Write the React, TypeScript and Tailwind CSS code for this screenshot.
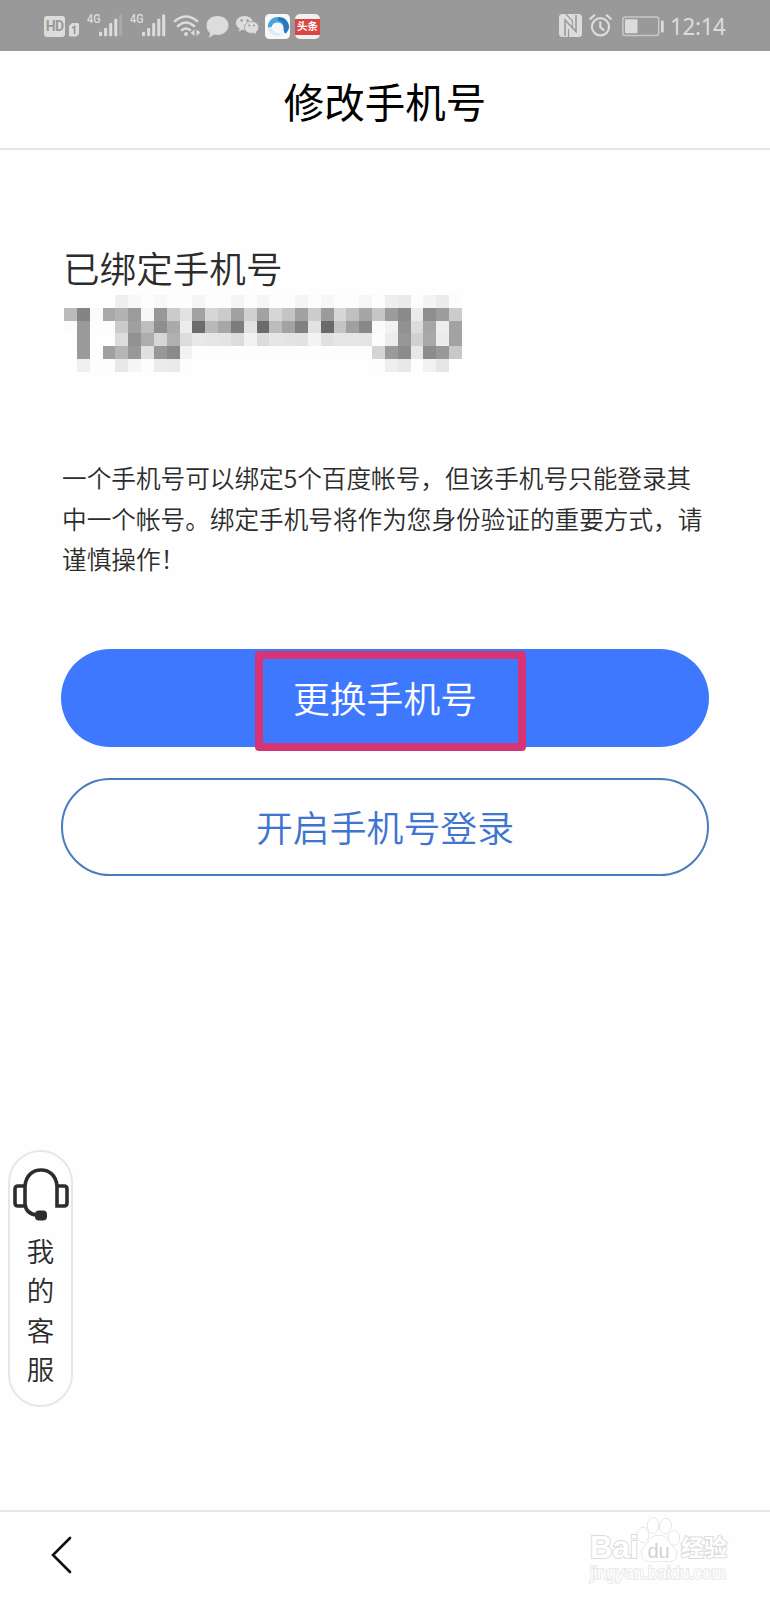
import React from "react";

const MOSAIC: string[] = [
  "fe fe fe fe ef f8 fd f8 fd fd f5 fd fd f5 fd f5 fd fd f5 fd f7 fd fd f6 fd ee ea fc f4 ec fc",
  "bb 84 fb a9 b3 9b f7 98 cb e2 a2 d6 cb a1 d0 a2 d6 c4 a1 cc 9b d6 c0 a6 c6 9c 8a ea 8e 9c cc",
  "fc 9a fd fd cb a0 be 8e aa ec 6c b9 a7 7c e2 6b bd a2 80 e2 6a c4 a0 88 fa f2 91 dc a6 ee a2",
  "fe 9a fe fe dc 92 ad d6 b0 dc e8 e6 e4 dc f2 dc e6 e4 e2 f4 e0 e6 e6 e4 fc ec 96 d0 a8 ec a2",
  "fe 9a fe a0 b5 98 e0 98 8a f2 fd fd fd fd fd fd fd fd fd fd fd fd fd fd d4 9a 8c e8 8c 98 c8",
  "fe f0 fe fd e8 f5 fd ec ea fd fe fe fe fe fe fe fe fe fe fe fe fe fe fe fd ee e8 fe f2 e6 fe",
];

function Signal({ dim }: { dim?: boolean }) {
  return (
    <div className="flex h-[23px] w-[37px]">
      <span className="h-3 w-3 origin-left scale-x-90 text-[12px] leading-[11px] font-medium">4G</span>
      <svg className="h-[23px] w-[24px]" viewBox="0 0 25 23" fill="currentColor">
        <rect x="0" y="18" width="3.2" height="4.6" rx="1" />
        <rect x="5.3" y="14" width="3.2" height="8.6" rx="1" />
        <rect x="10.6" y="9" width="3.2" height="13.6" rx="1" />
        <rect x="15.9" y="4.5" width="3.2" height="18.1" rx="1" />
        <rect x="21" y="0" width="3.2" height="22.6" rx="1" opacity={dim ? 0.25 : 1} />
      </svg>
    </div>
  );
}

function StatusBar() {
  return (
    <div className="flex h-[51px] shrink-0 items-start bg-[#999999] pt-[14px] pl-11 font-['Roboto'] text-[#dcdcdc]">
      <div className="mt-[2px] flex h-[21px] w-[21px] items-center justify-center rounded-[3px] bg-[#dcdcdc] text-[14px] font-bold tracking-tighter text-[#999999]">
        HD
      </div>
      <svg className="mt-[9px] ml-1 h-[14px] w-[10px]" viewBox="0 0 10 14">
        <path d="M0 3 3 0h5.500Q10 0 10 1.500V11l-2.500 2.500H1.500Q0 13.500 0 12Z" fill="#dcdcdc" />
        <path d="M3.200 5 5.600 3.500V11" fill="none" stroke="#999" strokeWidth="1.700" />
      </svg>
      <div className="ml-2"><Signal dim /></div>
      <div className="ml-[6px]"><Signal /></div>
      <svg className="ml-[6px] h-6 w-[28px]" viewBox="0 0 28 24" fill="none" stroke="currentColor" strokeWidth="2.600" strokeLinecap="round">
        <path d="M2 7Q13-2 24 7M5 12Q13 5 21 12M9 16Q13 13 17 16" />
        <circle cx="13" cy="20" r="2" fill="currentColor" stroke="none" />
        <path d="M21.500 15.500v6.500L17.500 19ZM23.500 15.500v6.500l4-3.500Z" fill="currentColor" stroke="none" />
      </svg>
      <svg className="ml-[5px] mt-[2px] h-[22px] w-[23px]" viewBox="0 0 23 22" fill="currentColor">
        <path d="M11.500 0C18 0 22.500 4 22.500 9.300S18 19 11.500 19q-2 0-3.600-.4Q5.500 21 2.500 21.500 4.300 19.500 4 17 .5 14 .5 9.500C.5 4 5 0 11.500 0Z" />
      </svg>
      <svg className="ml-[7px] mt-[2px] h-[20px] w-[23px]" viewBox="0 0 23 20">
        <path d="M8.500 0C13.500 0 17 3.200 17 7s-3.500 7-8.500 7l-2.400-.3L3 15.500l.5-3C1.300 11.300 0 9.300 0 7c0-4 3.500-7 8.500-7Z" fill="#dcdcdc" />
        <path d="M15.600 5.400c4 0 7.200 2.500 7.200 6 0 2-1 3.500-2.600 4.600l.4 2.800-2.800-1.600c-5.200 1-9.400-1.800-9.400-5.800 0-3.500 3.200-6 7.200-6Z" fill="#dcdcdc" stroke="#999" strokeWidth=".8" />
        <g fill="#999"><circle cx="5.600" cy="4.500" r="1.200" /><circle cx="11.500" cy="4.500" r="1.200" /><circle cx="13.300" cy="9.500" r="1" /><circle cx="18" cy="9.500" r="1" /></g>
      </svg>
      <svg className="ml-[6px] h-[25px] w-[25px]" viewBox="0 0 25 25">
        <rect width="25" height="25" rx="4.500" fill="#f6f8fa" />
        <path d="M3 14A9.500 9.500 0 1 1 19.500 18.800Q18.500 17 18.500 13A6.300 6.300 0 0 0 6.500 13Q4.500 12.500 3 14Z" fill="#4fa3df" />
        <path d="M13 3.300A9.500 9.500 0 0 1 21 19.500Q18.500 19 18.800 14.500 19 8 13 6.500Z" fill="#2579bd" />
        <path d="M3 14Q4.500 12.500 6.500 13 7 18 12 19L18 20Q14 22.500 10 21.500 4 20 3 14Z" fill="#d6eaf7" />
      </svg>
      <div className="ml-[5px] flex h-[25px] w-[25px] flex-col justify-center rounded-[5px] bg-[#f5f0f0]">
        <div className="flex h-[16px] items-center justify-center bg-[#dc4545] font-['Noto_Sans_CJK_SC'] text-[10.500px] leading-none font-bold text-white">头条</div>
      </div>
      <div className="ml-auto flex items-start pr-[42px]">
        <svg className="h-[23px] w-[23px]" viewBox="0 0 23 23">
          <rect width="23" height="23" rx="3.500" fill="#dcdcdc" />
          <path d="M6 22V6L17 17.500V1" fill="none" stroke="#999" strokeWidth="1.600" />
          <path d="M7 0 13.500 7V14M9.500 23V15" fill="none" stroke="#999" strokeWidth="1.200" />
        </svg>
        <svg className="ml-[7px] h-[23px] w-[23px]" viewBox="0 0 23 23" fill="none" stroke="currentColor" strokeWidth="2.200" strokeLinecap="round">
          <circle cx="11.500" cy="12.800" r="8.600" /><path d="M11.300 8.300v5l3.300 2.600M1.200 4.800 5.200 1.300M21.800 4.800l-4-3.500" />
        </svg>
        <svg className="ml-[10px] mt-[2px] h-[21px] w-[42px]" viewBox="0 0 42 21">
          <rect x=".9" y=".9" width="35.800" height="18.600" rx="2.500" fill="none" stroke="#c8c8c8" strokeWidth="1.500" />
          <rect x="3" y="3.200" width="12.500" height="14" rx="1" fill="#dcdcdc" /><rect x="39" y="4.500" width="2.700" height="12" rx="1.200" fill="#dcdcdc" />
        </svg>
        <span className="ml-[6px] w-[58px] origin-left scale-x-[0.97] font-['Noto_Sans'] text-[23px] leading-[25px] font-normal tracking-[-0.3px]">12:14</span>
      </div>
    </div>
  );
}

function MaskedNumber() {
  return (
    <div className="grid h-[77px] w-[398px] grid-cols-[repeat(31,minmax(0,1fr))] grid-rows-6">
      {MOSAIC.flatMap((row, r) =>
        row.split(" ").map((v, c) => <div key={`${r}-${c}`} style={{ backgroundColor: `#${v}${v}${v}` }} />)
      )}
    </div>
  );
}

function Watermark() {
  return (
    <div className="mr-[38px] mt-[5px] w-[142px] font-['Liberation_Sans','Noto_Sans_CJK_SC',sans-serif] text-white [paint-order:stroke_fill]">
      <div className="flex h-[46px] items-end [-webkit-text-stroke:2px_#dcdcdc]">
        <span className="w-[47px] text-[31px] leading-[30px] font-bold">Bai</span>
        <svg className="h-[46px] w-[43px] shrink-0" viewBox="0 0 43 46" fill="#fff" stroke="#d2d2d2" strokeWidth="1">
          <ellipse cx="6" cy="18" rx="5.500" ry="7.500" /><ellipse cx="16" cy="8.500" rx="5.500" ry="7.500" /><ellipse cx="28.500" cy="9" rx="5.500" ry="7.500" transform="rotate(12 28.500 9)" /><ellipse cx="37" cy="21" rx="5.500" ry="7" />
          <path d="M21.500 18.500c-8 0-9 6-13 10-7 6-4 16 4 16h20c8 0 9-9 4-14-6-6-7-12-15-12Z" />
          <text x="21.500" y="41" textAnchor="middle" fontSize="20" fontWeight="400" style={{ WebkitTextStroke: "0" }} fill="#d2d2d2" stroke="none">du</text>
        </svg>
        <span className="ml-[1px] w-[48px] text-[23px] leading-[29px] font-bold">经验</span>
      </div>
      <div className="-mt-[1px] text-[17.500px] leading-[22px] tracking-[-0.3px] [-webkit-text-stroke:1.500px_#e4e4e4]">jingyan.baidu.com</div>
    </div>
  );
}

export default function App() {
  return (
    <div className="relative flex h-[1600px] w-[770px] flex-col overflow-hidden bg-[#fefefe] font-['Noto_Sans_CJK_SC',sans-serif] font-[350] text-[#2c2c2c]">
      <StatusBar />
      <header className="flex h-[99px] shrink-0 items-center justify-center border-b-2 border-[#e5e5e5] pt-[3px] text-[40.500px] leading-none font-normal text-black">
        <h1>修改手机号</h1>
      </header>
      <main className="flex flex-1 flex-col px-[61px] pt-[92px]">
        <h2 className="ml-[2px] h-[53px] text-[36.600px] leading-[52px] font-[350] whitespace-nowrap">已绑定手机号</h2>
        <div className="ml-[3px]"><MaskedNumber /></div>
        <p className="mt-[85px] ml-[1px] h-[122px] text-[24.640px] leading-[40.600px] whitespace-nowrap">
          一个手机号可以绑定5个百度帐号，但该手机号只能登录其<br />
          中一个帐号。绑定手机号将作为您身份验证的重要方式，请<br />
          谨慎操作！
        </p>
        <button className="relative mt-[70px] flex h-[98px] shrink-0 items-center justify-center rounded-full bg-[#3d78ff] pb-[2px] text-[36.800px] leading-none text-white">
          更换手机号
          <span className="absolute top-[2px] left-[194px] h-[100px] w-[271px] rounded-[4px] border-[8px] border-[#d63575]" />
        </button>
        <button className="mt-[31px] flex h-[98px] shrink-0 items-center justify-center rounded-full border-2 border-[#4a7dbd] pb-[2px] text-[36.900px] leading-none text-[#3f74cf]">
          开启手机号登录
        </button>
      </main>
      <aside className="absolute top-[1150px] left-[8px] flex h-[257px] w-[65px] flex-col items-center rounded-full border-2 border-[#e7e7e7] bg-[#fefefe] pt-[16px]">
        <svg className="h-[54px] w-[56px] shrink-0" viewBox="0 0 56 54" fill="none" stroke="#2d2d2d" strokeWidth="3.600">
          <path d="M12 18H5q-3 0-3 3v14q0 3 3 3h7M12 38V18C13 7 20 2 28 2s15 5 16 16v20h7q3 0 3-3V21q0-3-3-3h-7M12 36q1 10 12 11" />
          <rect x="22" y="42.500" width="12" height="10" rx="4" fill="#2d2d2d" stroke="none" />
        </svg>
        <div className="mt-[9px] flex flex-col text-[27.500px] leading-[39.300px]"><span>我</span><span>的</span><span>客</span><span>服</span></div>
      </aside>
      <footer className="flex h-[90px] shrink-0 items-start justify-between border-t-2 border-[#e5e5e5]">
        <svg className="mt-[24px] ml-[51px] h-[38px] w-[22px]" viewBox="0 0 22 38" fill="none" stroke="#111" strokeWidth="2.600" strokeLinecap="round">
          <path d="M19 2 2 19l17 17" />
        </svg>
        <Watermark />
      </footer>
    </div>
  );
}
